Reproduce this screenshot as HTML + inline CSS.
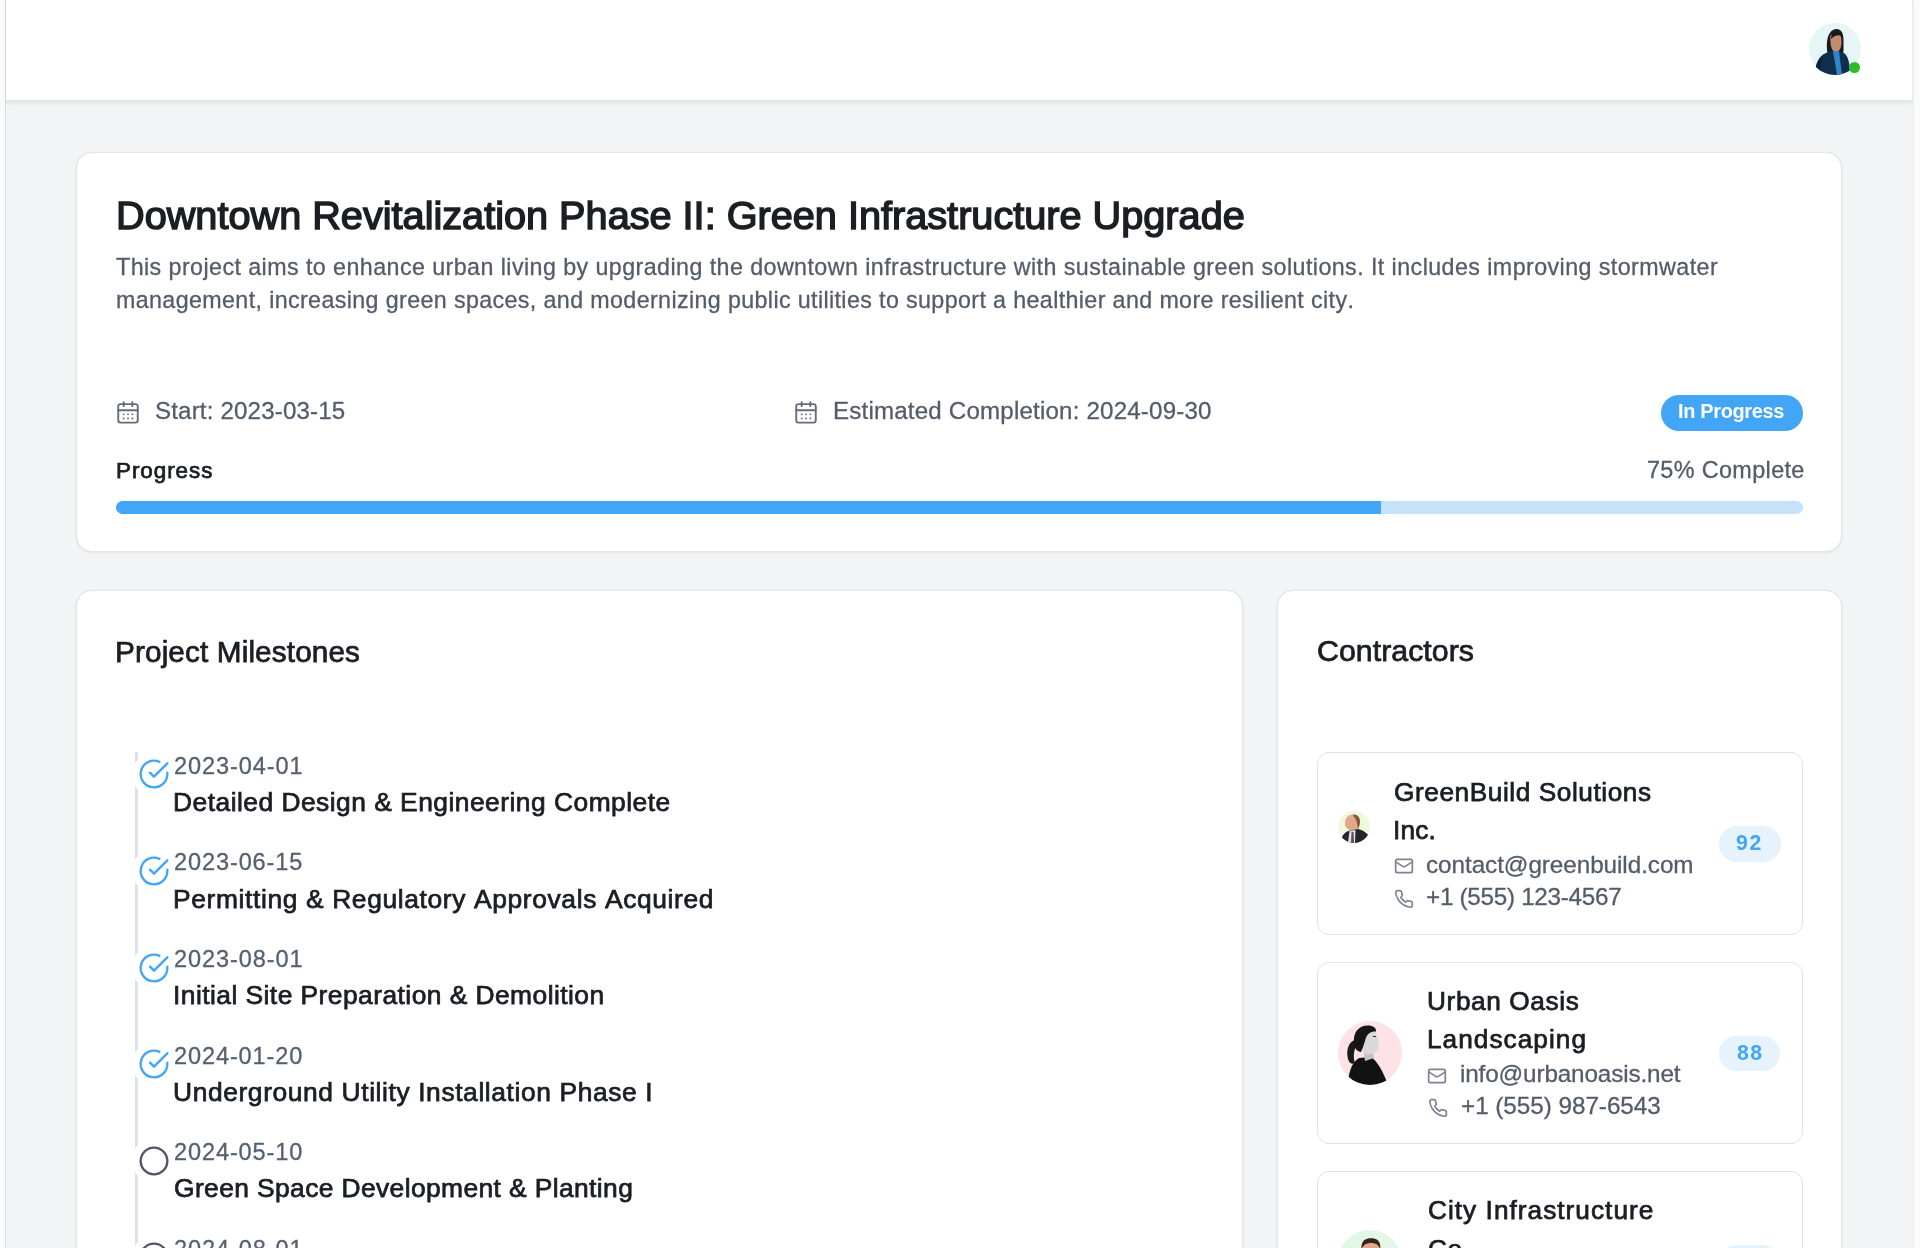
<!DOCTYPE html>
<html><head><meta charset="utf-8"><title>Project Dashboard</title>
<style>
*{box-sizing:border-box;margin:0;padding:0}
html,body{width:1920px;height:1248px;overflow:hidden;background:#fafafa;font-family:"Liberation Sans",sans-serif}
body{position:relative}
.abs{position:absolute}
.t{position:absolute;white-space:nowrap;line-height:1;font-kerning:none;will-change:transform}
</style></head><body>
<div class="abs" style="left:6px;top:0px;width:1906px;height:1248px;background:#f3f4f6"></div>
<div class="abs" style="left:5px;top:0px;width:1px;height:1248px;background:#d9dbe0"></div>
<div class="abs" style="left:1912px;top:0px;width:2px;height:1248px;background:#f0f1f4"></div>
<div class="abs" style="left:6px;top:0px;width:1906px;height:102px;background:#fff;border-bottom:2px solid #e3e5e9;box-shadow:0 2px 4px rgba(0,0,0,0.05)"></div>
<svg class="abs" style="left:1809px;top:23px" width="52" height="52" viewBox="0 0 52 52">
<defs><clipPath id="hc"><circle cx="26" cy="26" r="26"/></clipPath></defs>
<circle cx="26" cy="26" r="26" fill="#e6f5f5"/>
<g clip-path="url(#hc)">
<path d="M18.5 30 C17 20 18 8 26.5 6 C33 5.5 35 11 34.5 20 C34.5 26 35 30 33 32 L21 33 Z" fill="#1a1a20"/>
<path d="M21.5 12 C25 10 31 10.5 32 14 C33 19 32.5 25 30 27.5 C28 29 25 29 23.5 27 C21.5 24 21 17 21.5 12 Z" fill="#c48a6c"/>
<path d="M22.5 11 C26 8.5 31 9 33 12.5 C29 12 25 12.5 22 16 Z" fill="#1a1a20"/>
<path d="M6 52 C6 40 10 33 17 30 L22 28 L30 28 L35 30 C39 33 41 40 41 52 Z" fill="#0f2d4c"/>
<path d="M24 28 L28 52 L33 52 L30 28 Z" fill="#2f85c8"/>
<path d="M14 33 C12 40 11 46 11 52 L6 52 C6 43 9 37 14 33 Z" fill="#0a2036"/>
</g></svg>
<div class="abs" style="left:1849px;top:62px;width:11px;height:11px;border-radius:50%;background:#2bbd2b"></div>
<div class="abs" style="left:76px;top:152px;width:1766.4px;height:400.3px;background:#fff;border:1px solid #e4e6ea;border-radius:16px;box-shadow:0 1px 3px rgba(0,0,0,0.06),0 0 1.5px rgba(0,0,0,0.06)"></div>
<div class="abs" style="left:76px;top:590px;width:1166.5px;height:800px;background:#fff;border:1px solid #e4e6ea;border-radius:16px;box-shadow:0 1px 3px rgba(0,0,0,0.06),0 0 1.5px rgba(0,0,0,0.06)"></div>
<div class="abs" style="left:1277px;top:590px;width:565px;height:800px;background:#fff;border:1px solid #e4e6ea;border-radius:16px;box-shadow:0 1px 3px rgba(0,0,0,0.06),0 0 1.5px rgba(0,0,0,0.06)"></div>
<div class="t" style="left:115.64px;top:195.60px;font-size:39.681px;font-weight:400;color:#1c1e23;letter-spacing:-0.004px;-webkit-text-stroke:1.5px #1c1e23">Downtown Revitalization Phase II: Green Infrastructure Upgrade</div>
<div class="t" style="left:116.38px;top:256.21px;font-size:23.256px;font-weight:400;color:#545c6a;letter-spacing:0.431px;-webkit-text-stroke:0.3px #545c6a">This project aims to enhance urban living by upgrading the downtown infrastructure with sustainable green solutions. It includes improving stormwater</div>
<div class="t" style="left:116.36px;top:288.71px;font-size:23.256px;font-weight:400;color:#545c6a;letter-spacing:0.377px;-webkit-text-stroke:0.3px #545c6a">management, increasing green spaces, and modernizing public utilities to support a healthier and more resilient city.</div>
<svg class="abs" style="left:115.40px;top:399.90px" width="26" height="24.65" preserveAspectRatio="none" viewBox="0 0 24 24" fill="none" stroke="#656c7a" stroke-width="1.75" stroke-linecap="round" stroke-linejoin="round"><path d="M8 2v4"/><path d="M16 2v4"/><rect width="18" height="18" x="3" y="4" rx="2"/><path d="M3 10h18"/><path d="M8 14h.01"/><path d="M12 14h.01"/><path d="M16 14h.01"/><path d="M8 18h.01"/><path d="M12 18h.01"/><path d="M16 18h.01"/></svg>
<div class="t" style="left:154.80px;top:399.47px;font-size:24.128px;font-weight:400;color:#545c6a;letter-spacing:0.164px;-webkit-text-stroke:0.3px #545c6a">Start: 2023-03-15</div>
<svg class="abs" style="left:793.10px;top:399.90px" width="26" height="24.65" preserveAspectRatio="none" viewBox="0 0 24 24" fill="none" stroke="#656c7a" stroke-width="1.75" stroke-linecap="round" stroke-linejoin="round"><path d="M8 2v4"/><path d="M16 2v4"/><rect width="18" height="18" x="3" y="4" rx="2"/><path d="M3 10h18"/><path d="M8 14h.01"/><path d="M12 14h.01"/><path d="M16 14h.01"/><path d="M8 18h.01"/><path d="M12 18h.01"/><path d="M16 18h.01"/></svg>
<div class="t" style="left:833.42px;top:399.47px;font-size:24.128px;font-weight:400;color:#545c6a;letter-spacing:0.192px;-webkit-text-stroke:0.3px #545c6a">Estimated Completion: 2024-09-30</div>
<div class="abs" style="left:1661px;top:394.5px;width:142px;height:36px;border-radius:18px;background:#42a5f5"></div>
<div class="t" style="left:1678.27px;top:402.14px;font-size:19.913px;font-weight:700;color:#fff;letter-spacing:-0.321px">In Progress</div>
<div class="t" style="left:115.56px;top:459.59px;font-size:22.457px;font-weight:400;color:#1c1e23;letter-spacing:0.942px;-webkit-text-stroke:0.75px #1c1e23">Progress</div>
<div class="t" style="left:1646.60px;top:458.99px;font-size:23.402px;font-weight:400;color:#545c6a;letter-spacing:0.359px;-webkit-text-stroke:0.3px #545c6a">75% Complete</div>
<div class="abs" style="left:116px;top:501px;width:1687px;height:13px;border-radius:7px;background:#c4e3fa;overflow:hidden"><div style="width:1265px;height:13px;background:#42a5f5"></div></div>
<div class="t" style="left:114.56px;top:636.63px;font-size:29.724px;font-weight:400;color:#1c1e23;letter-spacing:0.127px;-webkit-text-stroke:0.75px #1c1e23">Project Milestones</div>
<div class="abs" style="left:135px;top:752px;width:3px;height:600px;background:#dde0e5"></div>
<div class="abs" style="left:132.2px;top:752.0px;width:44.8px;height:44.8px;border-radius:50%;background:#fff"></div>
<svg class="abs" style="left:138.10px;top:758.40px" width="32" height="32" preserveAspectRatio="none" viewBox="0 0 24 24" fill="none" stroke="#42a5f5" stroke-width="1.75" stroke-linecap="round" stroke-linejoin="round"><path d="M22 11.08V12a10 10 0 1 1-5.93-9.14"/><path d="m9 11 3 3L22 4"/></svg>
<div class="t" style="left:174.22px;top:754.86px;font-size:23.547px;font-weight:400;color:#566070;letter-spacing:0.910px;-webkit-text-stroke:0.3px #566070">2023-04-01</div>
<div class="t" style="left:173.24px;top:789.06px;font-size:26.381px;font-weight:400;color:#1c1e23;letter-spacing:0.481px;-webkit-text-stroke:0.75px #1c1e23">Detailed Design &amp; Engineering Complete</div>
<div class="abs" style="left:132.2px;top:848.55px;width:44.8px;height:44.8px;border-radius:50%;background:#fff"></div>
<svg class="abs" style="left:138.10px;top:854.95px" width="32" height="32" preserveAspectRatio="none" viewBox="0 0 24 24" fill="none" stroke="#42a5f5" stroke-width="1.75" stroke-linecap="round" stroke-linejoin="round"><path d="M22 11.08V12a10 10 0 1 1-5.93-9.14"/><path d="m9 11 3 3L22 4"/></svg>
<div class="t" style="left:174.22px;top:851.41px;font-size:23.547px;font-weight:400;color:#566070;letter-spacing:0.892px;-webkit-text-stroke:0.3px #566070">2023-06-15</div>
<div class="t" style="left:173.24px;top:885.61px;font-size:26.381px;font-weight:400;color:#1c1e23;letter-spacing:0.631px;-webkit-text-stroke:0.75px #1c1e23">Permitting &amp; Regulatory Approvals Acquired</div>
<div class="abs" style="left:132.2px;top:945.1px;width:44.8px;height:44.8px;border-radius:50%;background:#fff"></div>
<svg class="abs" style="left:138.10px;top:951.50px" width="32" height="32" preserveAspectRatio="none" viewBox="0 0 24 24" fill="none" stroke="#42a5f5" stroke-width="1.75" stroke-linecap="round" stroke-linejoin="round"><path d="M22 11.08V12a10 10 0 1 1-5.93-9.14"/><path d="m9 11 3 3L22 4"/></svg>
<div class="t" style="left:174.22px;top:947.96px;font-size:23.547px;font-weight:400;color:#566070;letter-spacing:0.910px;-webkit-text-stroke:0.3px #566070">2023-08-01</div>
<div class="t" style="left:172.97px;top:982.16px;font-size:26.381px;font-weight:400;color:#1c1e23;letter-spacing:0.452px;-webkit-text-stroke:0.75px #1c1e23">Initial Site Preparation &amp; Demolition</div>
<div class="abs" style="left:132.2px;top:1041.65px;width:44.8px;height:44.8px;border-radius:50%;background:#fff"></div>
<svg class="abs" style="left:138.10px;top:1048.05px" width="32" height="32" preserveAspectRatio="none" viewBox="0 0 24 24" fill="none" stroke="#42a5f5" stroke-width="1.75" stroke-linecap="round" stroke-linejoin="round"><path d="M22 11.08V12a10 10 0 1 1-5.93-9.14"/><path d="m9 11 3 3L22 4"/></svg>
<div class="t" style="left:174.22px;top:1044.51px;font-size:23.547px;font-weight:400;color:#566070;letter-spacing:0.884px;-webkit-text-stroke:0.3px #566070">2024-01-20</div>
<div class="t" style="left:173.36px;top:1078.71px;font-size:26.381px;font-weight:400;color:#1c1e23;letter-spacing:0.605px;-webkit-text-stroke:0.75px #1c1e23">Underground Utility Installation Phase I</div>
<div class="abs" style="left:132.2px;top:1138.2px;width:44.8px;height:44.8px;border-radius:50%;background:#fff"></div>
<svg class="abs" style="left:138.10px;top:1144.60px" width="32" height="32" preserveAspectRatio="none" viewBox="0 0 24 24" fill="none" stroke="#4f5766" stroke-width="1.75" stroke-linecap="round" stroke-linejoin="round"><circle cx="12" cy="12" r="10"/></svg>
<div class="t" style="left:174.22px;top:1141.06px;font-size:23.547px;font-weight:400;color:#566070;letter-spacing:0.884px;-webkit-text-stroke:0.3px #566070">2024-05-10</div>
<div class="t" style="left:174.07px;top:1175.26px;font-size:26.381px;font-weight:400;color:#1c1e23;letter-spacing:0.397px;-webkit-text-stroke:0.75px #1c1e23">Green Space Development &amp; Planting</div>
<div class="abs" style="left:132.2px;top:1234.75px;width:44.8px;height:44.8px;border-radius:50%;background:#fff"></div>
<svg class="abs" style="left:138.10px;top:1241.15px" width="32" height="32" preserveAspectRatio="none" viewBox="0 0 24 24" fill="none" stroke="#4f5766" stroke-width="1.75" stroke-linecap="round" stroke-linejoin="round"><circle cx="12" cy="12" r="10"/></svg>
<div class="t" style="left:174.22px;top:1237.61px;font-size:23.547px;font-weight:400;color:#566070;letter-spacing:0.910px;-webkit-text-stroke:0.3px #566070">2024-08-01</div>
<div class="t" style="left:173.24px;top:1271.81px;font-size:26.381px;font-weight:400;color:#1c1e23;letter-spacing:0.934px;-webkit-text-stroke:0.75px #1c1e23">Final Inspection &amp; Project Handover</div>
<div class="t" style="left:1316.66px;top:636.04px;font-size:30.306px;font-weight:400;color:#1c1e23;letter-spacing:0.040px;-webkit-text-stroke:0.75px #1c1e23">Contractors</div>
<div class="abs" style="left:1317px;top:752px;width:486px;height:183px;background:#fff;border:1.5px solid #dfe2e7;border-radius:12px"></div>
<div class="abs" style="left:1317px;top:962px;width:486px;height:182px;background:#fff;border:1.5px solid #dfe2e7;border-radius:12px"></div>
<div class="abs" style="left:1317px;top:1171px;width:486px;height:200px;background:#fff;border:1.5px solid #dfe2e7;border-radius:12px"></div>
<svg class="abs" style="left:1338px;top:811.2px" width="32" height="32" viewBox="0 0 32 32">
<defs><clipPath id="a1"><circle cx="16" cy="16" r="16"/></clipPath></defs>
<circle cx="16" cy="16" r="16" fill="#eefadb"/>
<g clip-path="url(#a1)">
<path d="M7 12 C7 7 10 3.5 15 3.5 C19 3.5 21.5 6 21.5 11 C21.5 15 20 19 16 19.5 C11 20 7 17 7 12 Z" fill="#e2a88a"/>
<path d="M15 3.5 C19 3 22.5 6 22 11 C21.8 14 21 16.5 20 18 C19.5 14 19 9 16 6 Z" fill="#8a5636"/>
<path d="M3 30 C4 24 7 20.5 12 19.5 L20 18 C25 19 30 22.5 32 27 L32 32 L3 32 Z" fill="#23262c"/>
<path d="M11.5 20 L17.5 19 L17 32 L10 32 Z" fill="#dde1e6"/>
<path d="M13.5 21 L15.5 21 L16 32 L13 32 Z" fill="#5d5048"/>
</g></svg>
<div class="t" style="left:1393.68px;top:778.99px;font-size:26.236px;font-weight:400;color:#1c1e23;letter-spacing:0.568px;-webkit-text-stroke:0.75px #1c1e23">GreenBuild Solutions</div>
<div class="t" style="left:1393.08px;top:817.29px;font-size:26.236px;font-weight:400;color:#1c1e23;letter-spacing:0.200px;-webkit-text-stroke:0.75px #1c1e23">Inc.</div>
<svg class="abs" style="left:1393.90px;top:855.80px" width="20" height="20" preserveAspectRatio="none" viewBox="0 0 24 24" fill="none" stroke="#7d8390" stroke-width="2" stroke-linecap="round" stroke-linejoin="round"><rect width="20" height="16" x="2" y="4" rx="2"/><path d="m22 7-8.97 5.7a1.94 1.94 0 0 1-2.06 0L2 7"/></svg>
<div class="t" style="left:1426.47px;top:853.35px;font-size:24.274px;font-weight:400;color:#545c6a;letter-spacing:-0.059px;-webkit-text-stroke:0.3px #545c6a">contact@greenbuild.com</div>
<svg class="abs" style="left:1393.90px;top:888.70px" width="20" height="20" preserveAspectRatio="none" viewBox="0 0 24 24" fill="none" stroke="#7d8390" stroke-width="2" stroke-linecap="round" stroke-linejoin="round"><path d="M22 16.92v3a2 2 0 0 1-2.18 2 19.79 19.79 0 0 1-8.63-3.07 19.5 19.5 0 0 1-6-6 19.79 19.79 0 0 1-3.07-8.67A2 2 0 0 1 4.11 2h3a2 2 0 0 1 2 1.72 12.84 12.84 0 0 0 .7 2.81 2 2 0 0 1-.45 2.11L8.09 9.91a16 16 0 0 0 6 6l1.27-1.27a2 2 0 0 1 2.11-.45 12.84 12.84 0 0 0 2.81.7A2 2 0 0 1 22 16.92z"/></svg>
<div class="t" style="left:1426.31px;top:884.85px;font-size:24.274px;font-weight:400;color:#545c6a;letter-spacing:-0.294px;-webkit-text-stroke:0.3px #545c6a">+1 (555) 123-4567</div>
<div class="abs" style="left:1719px;top:826px;width:61.5px;height:35.5px;border-radius:18px;background:#e6f3fd"></div>
<div class="t" style="left:1736.46px;top:832.33px;font-size:21.221px;font-weight:700;color:#42a5f5;letter-spacing:1.781px">92</div>
<svg class="abs" style="left:1338px;top:1020.9px" width="64" height="64" viewBox="0 0 64 64">
<defs><clipPath id="a2"><circle cx="32" cy="32" r="32"/></clipPath></defs>
<circle cx="32" cy="32" r="32" fill="#fde2e6"/>
<g clip-path="url(#a2)">
<path d="M17 19 C10 21 8 30 10 38 C11 42 14 44 17 42 C15 36 15.5 28 19.5 23 Z" fill="#1a1a1a"/>
<path d="M10 64 C10.5 52 13 42 21 37 L33 36 C39 40 45 50 50 64 Z" fill="#121212"/>
<path d="M25 26 L35 27 L36 37 L27 40 Z" fill="#c4c4c4"/>
<path d="M24 10 C30 6.5 37.5 8 39 14 L40 18.5 C41.5 21 42.5 22.5 40.5 23.5 L40.5 26.5 C40 30 37.5 33 33.5 33 L28 33 C24 30 22 24 22 18 Z" fill="#d9d9d9"/>
<path d="M16 22 C15 12 20 4.5 30 4.5 C35 4.5 38.5 7 38 10.5 C33.5 10 29.5 12 27.5 18 C26.5 22 25 26 23 31 C19 30.5 16 27 16 22 Z" fill="#151515"/>
<path d="M35 15.5 L38 15.5" stroke="#333" stroke-width="1"/>
</g></svg>
<div class="t" style="left:1426.88px;top:987.99px;font-size:26.236px;font-weight:400;color:#1c1e23;letter-spacing:0.606px;-webkit-text-stroke:0.75px #1c1e23">Urban Oasis</div>
<div class="t" style="left:1426.75px;top:1026.19px;font-size:26.236px;font-weight:400;color:#1c1e23;letter-spacing:1.035px;-webkit-text-stroke:0.75px #1c1e23">Landscaping</div>
<svg class="abs" style="left:1426.90px;top:1066.20px" width="20" height="20" preserveAspectRatio="none" viewBox="0 0 24 24" fill="none" stroke="#7d8390" stroke-width="2" stroke-linecap="round" stroke-linejoin="round"><rect width="20" height="16" x="2" y="4" rx="2"/><path d="m22 7-8.97 5.7a1.94 1.94 0 0 1-2.06 0L2 7"/></svg>
<div class="t" style="left:1459.88px;top:1061.85px;font-size:24.274px;font-weight:400;color:#545c6a;letter-spacing:-0.134px;-webkit-text-stroke:0.3px #545c6a">info@urbanoasis.net</div>
<svg class="abs" style="left:1427.70px;top:1097.80px" width="20" height="20" preserveAspectRatio="none" viewBox="0 0 24 24" fill="none" stroke="#7d8390" stroke-width="2" stroke-linecap="round" stroke-linejoin="round"><path d="M22 16.92v3a2 2 0 0 1-2.18 2 19.79 19.79 0 0 1-8.63-3.07 19.5 19.5 0 0 1-6-6 19.79 19.79 0 0 1-3.07-8.67A2 2 0 0 1 4.11 2h3a2 2 0 0 1 2 1.72 12.84 12.84 0 0 0 .7 2.81 2 2 0 0 1-.45 2.11L8.09 9.91a16 16 0 0 0 6 6l1.27-1.27a2 2 0 0 1 2.11-.45 12.84 12.84 0 0 0 2.81.7A2 2 0 0 1 22 16.92z"/></svg>
<div class="t" style="left:1460.81px;top:1094.35px;font-size:24.274px;font-weight:400;color:#545c6a;letter-spacing:-0.035px;-webkit-text-stroke:0.3px #545c6a">+1 (555) 987-6543</div>
<div class="abs" style="left:1719px;top:1036px;width:60.5px;height:34.5px;border-radius:18px;background:#e6f3fd"></div>
<div class="t" style="left:1736.53px;top:1041.83px;font-size:21.221px;font-weight:700;color:#42a5f5;letter-spacing:1.522px">88</div>
<svg class="abs" style="left:1338px;top:1230px" width="64" height="64" viewBox="0 0 64 64">
<defs><clipPath id="a3"><circle cx="32" cy="32" r="32"/></clipPath></defs>
<circle cx="32" cy="32" r="32" fill="#e3f7e9"/>
<g clip-path="url(#a3)">
<path d="M23.5 20 C23.5 12 27 8.4 33 8.4 C39 8.4 42.5 12 42.3 20 L42 32 L24 32 Z" fill="#e0a98a"/>
<path d="M23.5 19 C23 11 27 8.2 33 8.2 C39 8.2 43 11 42.3 19 C40 14 37 13 33 13 C29 13 26 14 23.5 19 Z" fill="#3a2418"/>
</g></svg>
<div class="t" style="left:1427.57px;top:1197.19px;font-size:26.236px;font-weight:400;color:#1c1e23;letter-spacing:1.026px;-webkit-text-stroke:0.75px #1c1e23">City Infrastructure</div>
<div class="t" style="left:1427.57px;top:1235.59px;font-size:26.236px;font-weight:400;color:#1c1e23;letter-spacing:0.500px;-webkit-text-stroke:0.75px #1c1e23">Co.</div>
<div class="abs" style="left:1719px;top:1245px;width:60.5px;height:34.5px;border-radius:18px;background:#e6f3fd"></div>
</body></html>
